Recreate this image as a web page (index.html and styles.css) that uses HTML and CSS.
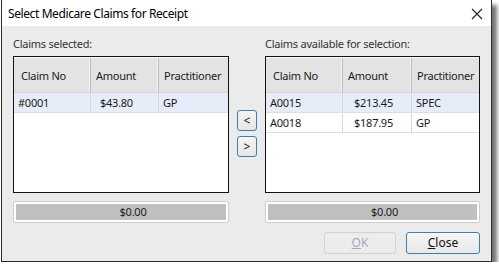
FILE: index.html
```html
<!DOCTYPE html>
<html lang="en">
<head>
    <meta charset="UTF-8">
    <title>Select Medicare Claims for Receipt</title>
    <link rel="stylesheet" href="styles.css">
</head>
<body>
    <div class="window">
        <div class="titlebar">
            <span class="title">Select Medicare Claims for Receipt</span>
            <svg class="close-x" width="12" height="12" viewBox="0 0 12 12">
                <path d="M1 1 L11 11 M11 1 L1 11" stroke="#222" stroke-width="1.1" fill="none"/>
            </svg>
        </div>

        <div class="content">
            <div class="panels">
                <div class="panel left">
                    <div class="label">Claims selected:</div>
                    <div class="grid">
                        <div class="row head">
                            <div class="cell c1">Claim No</div>
                            <div class="cell c2">Amount</div>
                            <div class="cell c3">Practitioner</div>
                        </div>
                        <div class="row selected">
                            <div class="cell c1">#0001</div>
                            <div class="cell c2 amt">$43.80</div>
                            <div class="cell c3">GP</div>
                        </div>
                    </div>
                    <div class="total"><span>$0.00</span></div>
                </div>

                <div class="movers">
                    <button class="mover">&lt;</button>
                    <button class="mover">&gt;</button>
                </div>

                <div class="panel right">
                    <div class="label">Claims available for selection:</div>
                    <div class="grid">
                        <div class="row head">
                            <div class="cell c1">Claim No</div>
                            <div class="cell c2">Amount</div>
                            <div class="cell c3">Practitioner</div>
                        </div>
                        <div class="row selected">
                            <div class="cell c1">A0015</div>
                            <div class="cell c2 amt">$213.45</div>
                            <div class="cell c3">SPEC</div>
                        </div>
                        <div class="row">
                            <div class="cell c1">A0018</div>
                            <div class="cell c2 amt">$187.95</div>
                            <div class="cell c3">GP</div>
                        </div>
                    </div>
                    <div class="total"><span>$0.00</span></div>
                </div>
            </div>

            <div class="actions">
                <button class="btn disabled"><u>O</u>K</button>
                <button class="btn primary"><u>C</u>lose</button>
            </div>
        </div>
    </div>
</body>
</html>
```

FILE: styles.css
```css
body {
    margin: 0;
    background: #fff;
    font-family: "Noto Sans", sans-serif;
    font-size: 11px;
    letter-spacing: -0.25px;
    color: #1a1a1a;
}
.window {
    margin-left: 1px;
    width: 489px;
    height: 261px;
    border: 1px solid #2b2b2b;
    border-top: none;
    background: #ebebeb;
    box-shadow: 5px 5px 4px rgba(0, 0, 0, 0.55);
    display: flex;
    flex-direction: column;
}
.titlebar {
    height: 26px;
    flex: none;
    background: #fff;
    display: flex;
    align-items: center;
    justify-content: space-between;
    padding: 0 8px 0 6px;
}
.title {
    font-size: 12px;
    letter-spacing: -0.4px;
    color: #000;
}
.close-x {
    margin-top: 1px;
}
.content {
    flex: 1;
    padding: 10px 11px 0 11px;
}
.panels {
    display: flex;
}
.panel.left {
    width: 216px;
}
.panel.right {
    width: 215px;
}
.label {
    height: 16px;
    line-height: 16px;
    margin-bottom: 4px;
    color: #333;
}
.grid {
    height: 135px;
    border: 1px solid #111;
    background: #fff;
}
.row {
    display: flex;
    height: 19px;
    border-bottom: 1px solid #dedede;
}
.row.head {
    height: 34px;
    background: #e3e3e3;
    border-top: 1px solid #fafafa;
    border-bottom: 1px solid #d4d4d4;
}
.row.selected {
    background: #e6edf8;
}
.cell {
    display: flex;
    align-items: center;
    padding-left: 4px;
    border-right: 1px solid #d8d8d8;
    box-sizing: border-box;
    white-space: nowrap;
}
.head .cell {
    padding-left: 7px;
    border-right: 1px solid #bdbdbd;
    box-shadow: inset -1px 0 0 #f2f2f2;
}
.head .cell.c2 {
    padding-left: 5px;
}
.head .cell.c3 {
    padding-left: 5px;
}
.cell.c1 {
    width: 77px;
}
.cell.c2 {
    width: 68px;
}
.cell.c3 {
    flex: 1;
    border-right: none;
}
.head .cell.c3 {
    border-right: none;
    box-shadow: none;
}
.left .cell.amt {
    padding-left: 9px;
}
.right .cell.amt {
    padding-left: 11px;
}
.right .cell.c2 {
    width: 69px;
}
.total {
    margin-top: 8px;
    height: 22px;
    box-sizing: border-box;
    border: 1px solid #c9cde0;
    border-radius: 2px;
    background: #fff;
    padding: 2px;
}
.total span {
    display: block;
    height: 16px;
    line-height: 16px;
    background: #c1c0c1;
    text-align: center;
    padding-left: 24px;
}
.movers {
    width: 36px;
    display: flex;
    flex-direction: column;
    align-items: center;
    padding-top: 74px;
    gap: 5px;
}
.mover {
    width: 20px;
    height: 21px;
    padding: 0;
    border: 1px solid #3c7fb1;
    border-radius: 3px;
    background: linear-gradient(#f4f4f4, #e6e6e6);
    font-family: inherit;
    font-size: 12px;
    color: #111;
    line-height: 17px;
}
.actions {
    display: flex;
    justify-content: flex-end;
    gap: 10px;
    margin-top: 9px;
}
.btn {
    height: 22px;
    padding: 0;
    border-radius: 3px;
    font-family: inherit;
    font-size: 12px;
    letter-spacing: 0;
    line-height: 18px;
}
.btn.disabled {
    width: 72px;
    border: 1px solid #d2d2d2;
    background: #ececec;
    color: #a8a8b8;
}
.btn.primary {
    width: 74px;
    border: 1px solid #3c7fb1;
    background: linear-gradient(#f6f6f6, #e8e8e8);
    color: #111;
}
```
